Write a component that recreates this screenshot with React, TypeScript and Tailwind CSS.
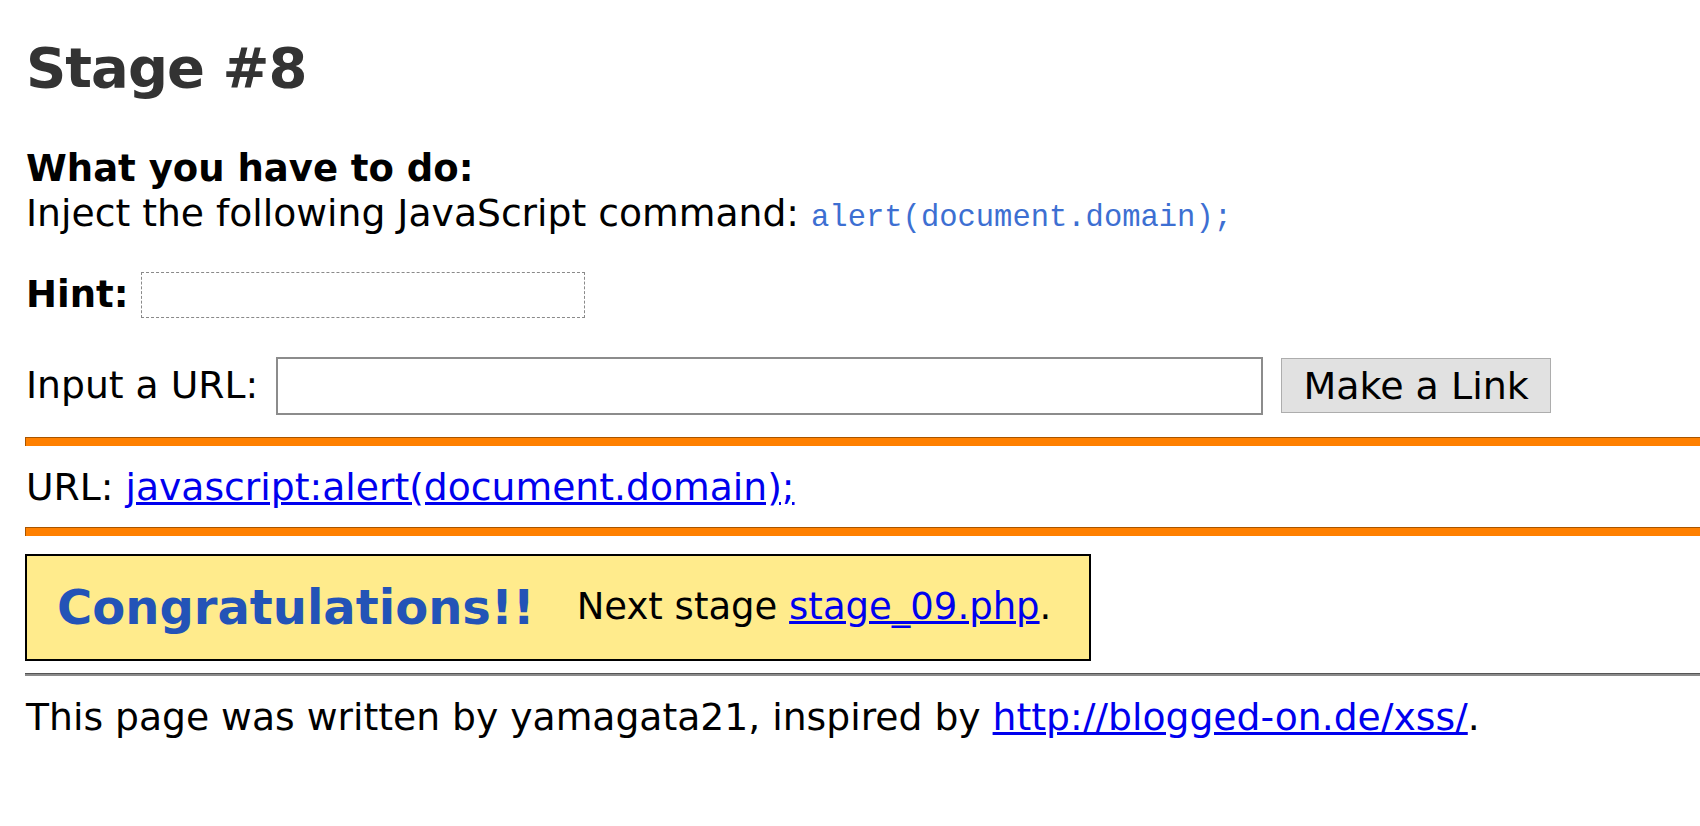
const fontBody = "font-['DejaVu_Sans',Verdana,sans-serif]";

const OrangeRule = ({ className = "" }: { className?: string }) => (
  <div
    className={`h-[9px] border-t border-l border-[#a85500] bg-[#ff8000] ${className}`}
  />
);

export default function App() {
  return (
    <div
      className={`min-h-[826px] bg-white pb-10 pl-[25px] pt-[36px] text-[37.7px] text-black ${fontBody}`}
    >
      {/* Title */}
      <h1 className="pl-[1px] text-[56px] leading-[64px] font-bold tracking-[-1px] text-[#333333]">
        Stage #8
      </h1>

      {/* Task */}
      <div className="mt-[46px] pl-[1px] leading-[45px]">
        <div className="text-[37px] font-bold">What you have to do:</div>
        <div>
          Inject the following JavaScript command:{" "}
          <span className="font-['Liberation_Mono',monospace] text-[30.5px] text-[#3d6fd2]">
            alert(document.domain);
          </span>
        </div>
      </div>

      {/* Hint */}
      <div className="mt-[26px] flex items-center gap-[13px] pl-[1px]">
        <span className="text-[37px] font-bold">Hint:</span>
        <span className="h-[46px] w-[444px] border border-dashed border-[#8a8a8a]" />
      </div>

      {/* Form */}
      <form
        className="mt-[34px] flex items-center pl-[1px]"
        onSubmit={(e) => e.preventDefault()}
      >
        <label htmlFor="url" className="mr-[18px]">
          Input a URL:
        </label>
        <input
          id="url"
          type="text"
          className="h-[58px] w-[987px] border-2 border-[#8c8c8c] bg-white px-2 text-[37px] outline-none"
        />
        <button
          type="submit"
          className="ml-[18px] h-[55px] w-[270px] border border-[#adadad] bg-[#e1e1e1] text-[38px] leading-none text-black"
        >
          Make a Link
        </button>
      </form>

      <OrangeRule className="mt-[22px]" />

      {/* Result */}
      <div className="mt-[19px] pl-[1px] leading-[45px]">
        URL:{" "}
        <a href="#" className="text-[#0000ee] underline">
          javascript:alert(document.domain);
        </a>
      </div>

      <OrangeRule className="mt-[17px]" />

      {/* Success box */}
      <div className="mt-[18px] flex h-[107px] w-[1066px] items-center border-2 border-black bg-[#ffeb8c] pl-[30px]">
        <span className="text-[48px] font-bold text-[#2353b7]">
          Congratulations!!
        </span>
        <span className="ml-[42px] text-[37px]">
          Next stage{" "}
          <a href="#" className="text-[#0000ee] underline">
            stage_09.php
          </a>
          .
        </span>
      </div>

      <div className="mt-[12px] h-[3px] border-t border-[#555555] bg-[#8a8a8a]" />

      {/* Footer */}
      <div className="mt-[19px] pl-[1px] leading-[45px]">
        This page was written by yamagata21, inspired by{" "}
        <a href="#" className="text-[#0000ee] underline">
          http://blogged-on.de/xss/
        </a>
        .
      </div>
    </div>
  );
}
